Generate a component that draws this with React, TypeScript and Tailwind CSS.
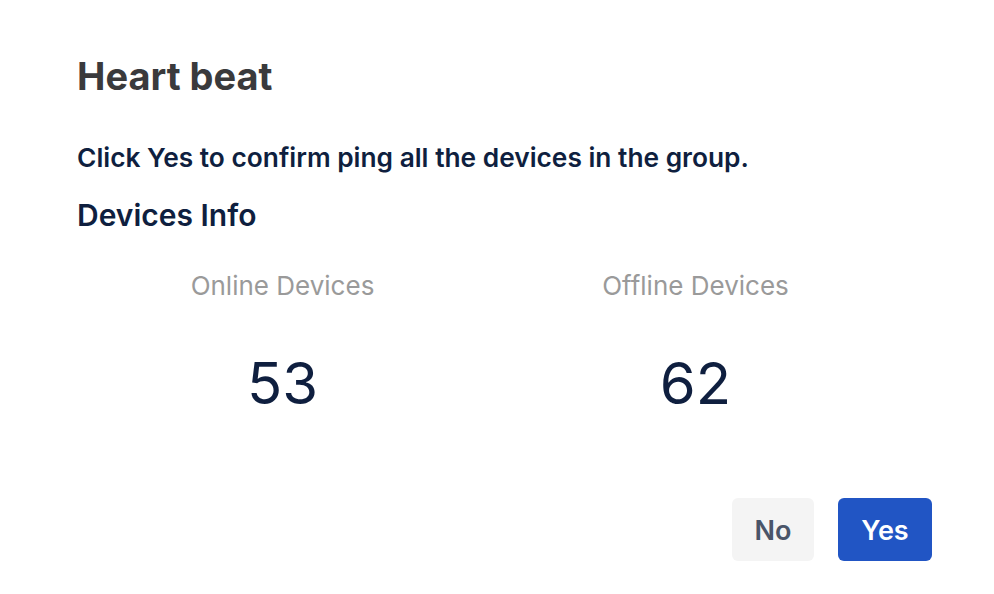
import React from "react";

function Stat({ label, value }: { label: string; value: number }) {
  return (
    <div className="flex flex-col items-center">
      <span className="text-[26px] leading-[34px] text-[#9a9a9a]">{label}</span>
      <span className="mt-[48px] text-[58px] leading-[64px] text-[#0f1f3f]">{value}</span>
    </div>
  );
}

export default function App() {
  return (
    <div className="w-[994px] h-[594px] bg-white pl-[77px] pr-[62px] pt-[50px] font-['Inter',sans-serif]">
      <h1 className="text-[38px] leading-[52px] font-bold text-[#3a3a3c]">Heart beat</h1>
      <p className="mt-[39px] text-[26.3px] leading-[34px] font-semibold text-[#0f1f3f]">
        Click Yes to confirm ping all the devices in the group.
      </p>
      <h2 className="mt-[20px] text-[30px] leading-[40px] font-semibold text-[#0f1f3f]">Devices Info</h2>
      <div className="mt-[34px] grid grid-cols-2 w-[826px] -ml-px">
        <Stat label="Online Devices" value={53} />
        <Stat label="Offline Devices" value={62} />
      </div>
      <div className="mt-[83px] flex justify-end gap-[24px]">
        <button className="w-[82px] h-[63px] pt-[3px] rounded-[6px] bg-[#f4f4f4] text-[27px] font-semibold text-[#4a5569]">
          No
        </button>
        <button className="w-[94px] h-[63px] pt-[3px] rounded-[6px] bg-[#2155c4] text-[27px] font-semibold text-white">
          Yes
        </button>
      </div>
    </div>
  );
}
